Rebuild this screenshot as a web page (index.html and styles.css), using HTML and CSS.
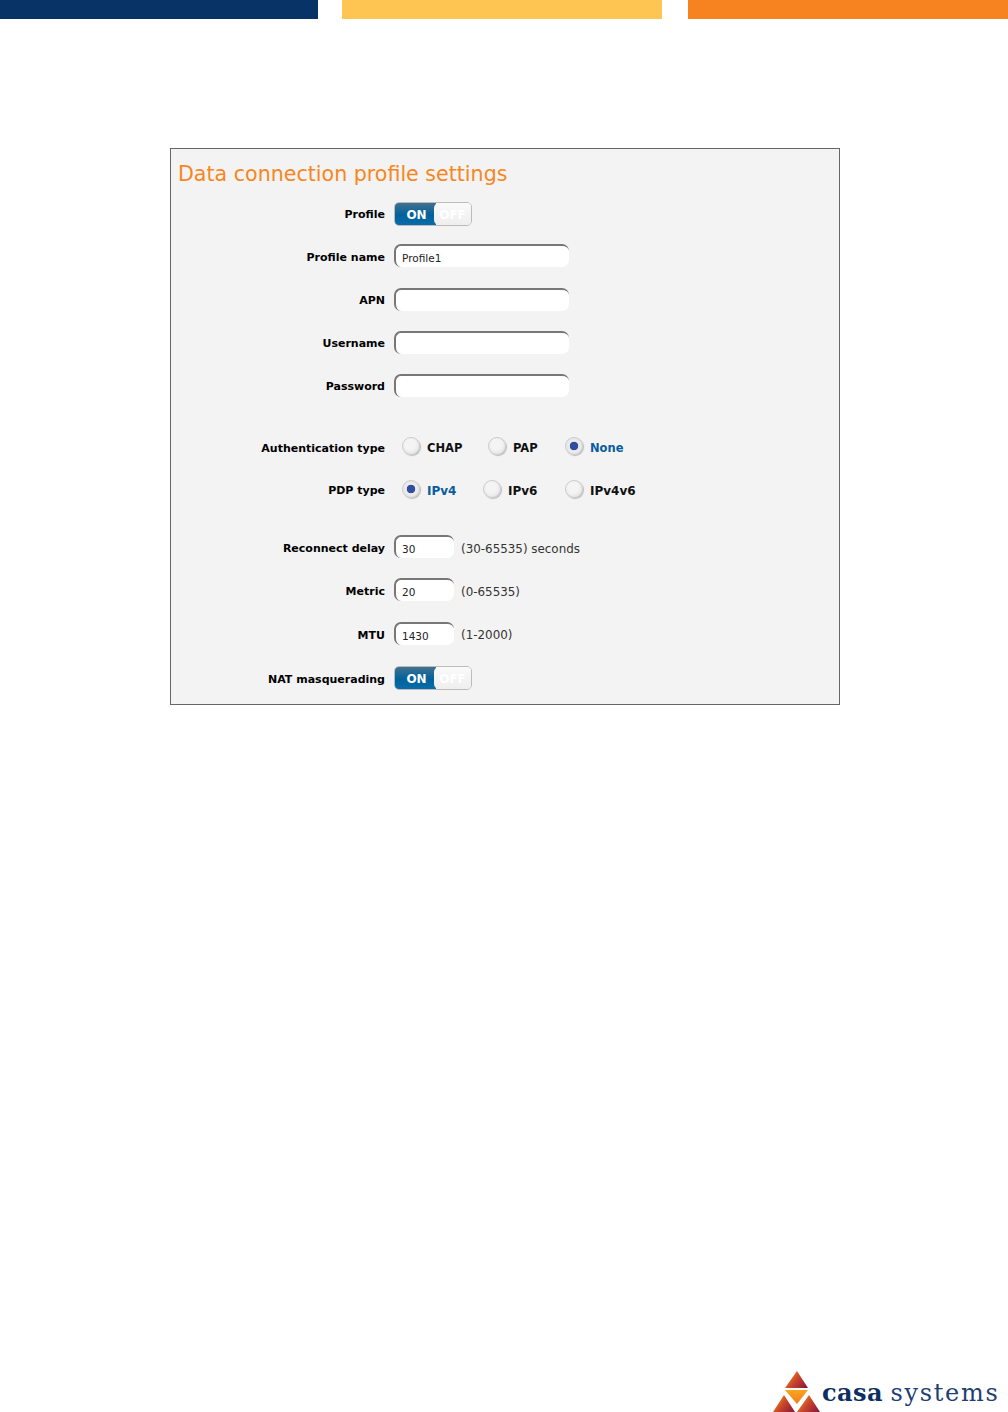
FILE: index.html
```html
<!DOCTYPE html>
<html lang="en">
<head>
    <meta charset="UTF-8">
    <title>Data connection profile settings</title>
    <link rel="stylesheet" href="styles.css">
</head>
<body>
    <div class="topbar">
        <div class="stripe navy"></div>
        <div class="stripe yellow"></div>
        <div class="stripe orange"></div>
    </div>

    <div class="panel">
        <h1>Data connection profile settings</h1>

        <div class="row">
            <label>Profile</label>
            <div class="toggle"><span class="on">ON</span><span class="off">OFF</span></div>
        </div>
        <div class="row name-row">
            <label>Profile name</label>
            <div class="field wide">Profile1</div>
        </div>
        <div class="row">
            <label>APN</label>
            <div class="field wide"></div>
        </div>
        <div class="row">
            <label>Username</label>
            <div class="field wide"></div>
        </div>
        <div class="row">
            <label>Password</label>
            <div class="field wide"></div>
        </div>

        <div class="row radios first-radios">
            <label>Authentication type</label>
            <div class="radio w-chap"><i></i>CHAP</div>
            <div class="radio w-pap"><i></i>PAP</div>
            <div class="radio selected"><i></i>None</div>
        </div>
        <div class="row radios pdp-row">
            <label>PDP type</label>
            <div class="radio selected w-ipv4"><i></i>IPv4</div>
            <div class="radio w-ipv6"><i></i>IPv6</div>
            <div class="radio"><i></i>IPv4v6</div>
        </div>

        <div class="row short-row delay-row">
            <label>Reconnect delay</label>
            <div class="field narrow">30</div>
            <span class="hint">(30-65535) seconds</span>
        </div>
        <div class="row short-row">
            <label>Metric</label>
            <div class="field narrow">20</div>
            <span class="hint">(0-65535)</span>
        </div>
        <div class="row short-row">
            <label>MTU</label>
            <div class="field narrow">1430</div>
            <span class="hint">(1-2000)</span>
        </div>
        <div class="row nat-row">
            <label>NAT masquerading</label>
            <div class="toggle"><span class="on">ON</span><span class="off">OFF</span></div>
        </div>
    </div>

    <div class="footer">
        <svg class="logo-mark" width="47" height="41" viewBox="0 0 47 41">
            <defs>
                <linearGradient id="tri" x1="0" y1="0.2" x2="1" y2="0.8">
                    <stop offset="0" stop-color="#f8981d"/>
                    <stop offset="0.5" stop-color="#c8452a"/>
                    <stop offset="1" stop-color="#8e1b3b"/>
                </linearGradient>
                <linearGradient id="mid" x1="0" y1="0" x2="0" y2="1">
                    <stop offset="0" stop-color="#faa61a"/>
                    <stop offset="1" stop-color="#f47b20"/>
                </linearGradient>
            </defs>
            <polygon points="24,0 35,17 12,17" fill="url(#tri)"/>
            <polygon points="12,19 35,19 24,33" fill="url(#mid)"/>
            <polygon points="11,24 22,41 0,41" fill="url(#tri)"/>
            <polygon points="36,24 47,41 24,41" fill="url(#tri)"/>
        </svg>
        <div class="logo-text"><b>casa</b> <span>systems</span></div>
    </div>
</body>
</html>
```

FILE: styles.css
```css
html, body {
    margin: 0;
    padding: 0;
}
body {
    height: 1412px;
    display: flex;
    flex-direction: column;
    background: white;
    font-family: "DejaVu Sans", Verdana, sans-serif;
    overflow: hidden;
}
.topbar {
    display: flex;
    height: 19px;
}
.stripe {
    width: 320px;
}
.stripe.navy {
    width: 318px;
    margin-right: 24px;
    background-color: #083367;
}
.stripe.yellow {
    background-color: #ffc553;
}
.stripe.orange {
    margin-left: auto;
    background-color: #f78220;
}
.panel {
    box-sizing: border-box;
    width: 670px;
    height: 557px;
    margin: 129px 0 0 170px;
    padding: 12px 0 0 0;
    background-color: #f3f3f3;
    border: 1px solid #666;
}
h1 {
    margin: 0 0 5px 7px;
    height: 26px;
    line-height: 26px;
    font-size: 20.6px;
    font-weight: normal;
    color: #f7861e;
}
.row {
    display: flex;
    align-items: center;
    height: 43px;
}
.row label {
    box-sizing: border-box;
    width: 214px;
    padding-top: 2px;
    text-align: right;
    font-size: 11px;
    font-weight: bold;
    color: #000;
    margin-right: 9px;
}
.name-row .field {
    margin-top: -2px;
}
.toggle {
    box-sizing: border-box;
    display: flex;
    width: 78px;
    height: 24px;
    border: 1px solid #bbb;
    border-radius: 5px;
    overflow: hidden;
    font-size: 12px;
    font-weight: bold;
    line-height: 24px;
    text-align: center;
}
.toggle .on {
    width: 41px;
    padding-left: 2px;
    box-sizing: border-box;
    color: white;
    background: linear-gradient(to bottom, #41708f, #00629c 55%, #0a6ca8);
}
.toggle .off {
    flex: 1;
    margin-left: -2px;
    color: #fff;
    background: linear-gradient(to bottom, #fafafa, #eee);
    border-radius: 5px 0 0 5px;
}
.field {
    box-sizing: border-box;
    height: 23px;
    padding: 4px 0 0 6px;
    border-top: 2px solid #777;
    border-left: 2px solid #777;
    border-radius: 7px;
    background-color: white;
    font-size: 10.5px;
    line-height: 16px;
    color: #222;
}
.field.wide {
    width: 175px;
}
.field.narrow {
    width: 60px;
}
.hint {
    margin-left: 7px;
    padding-top: 4px;
    font-size: 11.9px;
    color: #333;
}
.radios {
    height: 42.5px;
}
.first-radios {
    margin-top: 19px;
}
.short-row {
    height: 43.3px;
}
.short-row label {
    padding-top: 4px;
}
.delay-row {
    margin-top: 14px;
}
.nat-row {
    margin-top: 2px;
}
.radio {
    display: flex;
    align-items: center;
    margin-left: 8px;
    padding-top: 2px;
    font-size: 11.5px;
    font-weight: bold;
    color: #111;
}
.pdp-row .radio {
    font-size: 12px;
}
.radio + .radio {
    margin-left: 0;
}
.radio i {
    box-sizing: border-box;
    display: block;
    width: 18px;
    height: 18px;
    margin: -4px 7px 0 0;
    border: 1px solid #ccc;
    border-radius: 50%;
    background: radial-gradient(circle at 45% 40%, #f4f4f4 40%, #dcdcdc 100%);
    box-shadow: 1px 1px 1px #bbb;
}
.radio.selected {
    color: #0b5c9e;
}
.radio.selected i {
    background: radial-gradient(circle, #2f4f9e 0, #2f4f9e 4px, #eee 4.6px, #ddd 100%);
}
.w-chap {
    width: 86px;
}
.w-pap {
    width: 77px;
}
.w-ipv4 {
    width: 81px;
}
.w-ipv6 {
    width: 82px;
}
.footer {
    display: flex;
    align-items: flex-end;
    margin-top: auto;
    margin-left: 773px;
    height: 41px;
}
.logo-mark {
    display: block;
    flex: none;
}
.logo-text {
    margin: 0 0 5px 2px;
    font-family: "DejaVu Serif", "Liberation Serif", serif;
    font-size: 24px;
    line-height: 28px;
    white-space: nowrap;
    color: #1f3f73;
}
.logo-text b {
    letter-spacing: 0.4px;
    color: #0c2f63;
}
.logo-text span {
    letter-spacing: 1.7px;
}
```
